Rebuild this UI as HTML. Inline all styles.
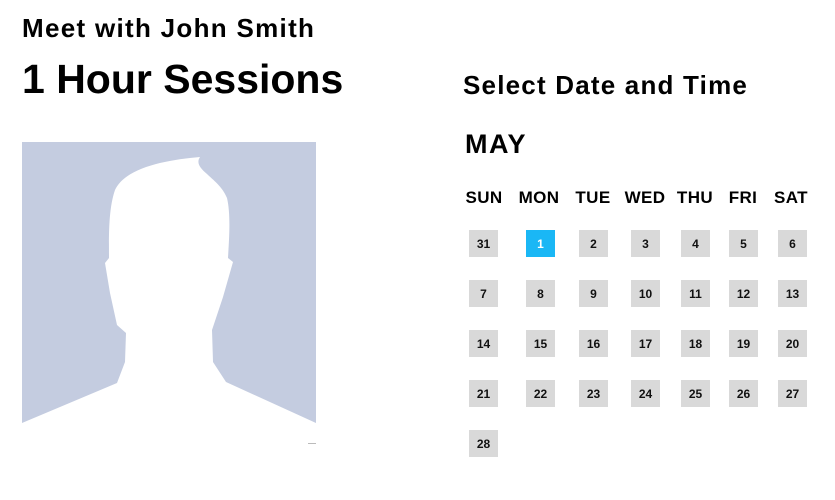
<!DOCTYPE html><html><head><style>
body{margin:0;width:835px;height:500px;background:#fff;font-family:"Liberation Sans",Arial,sans-serif;position:relative;overflow:hidden;color:#000}
.t{position:absolute;font-weight:bold;white-space:nowrap}
.h{position:absolute;top:188px;font-size:17px;font-weight:bold;transform:translateX(-50%);letter-spacing:0.4px}
.d{position:absolute;width:29px;height:27px;background:#d9d9d9;font-size:12px;font-weight:bold;display:flex;align-items:center;justify-content:center;color:#111}
.sel{background:#1ab7f5;color:#fff}
</style></head><body>
<div class="t" style="left:22px;top:13px;font-size:26px;letter-spacing:1.3px">Meet with John Smith</div>
<div class="t" style="left:22px;top:56px;font-size:41px">1 Hour Sessions</div>
<div class="t" style="left:463px;top:70px;font-size:26px;letter-spacing:1.2px">Select Date and Time</div>
<div class="t" style="left:465px;top:129px;font-size:27px;letter-spacing:1.5px">MAY</div>
<svg style="position:absolute;left:0;top:0" width="835" height="500">
<rect x="22" y="142" width="294" height="282" fill="#c4cce0"/>
<path d="M200,157 C165,160 125,168 115,190 C108,210 109,240 109,258 L105,263 L110,293 L117,325 L126,333 L125,362 L117,383 L22,423 L22,424 L316,424 L316,423 L226,382 L213,362 L212,330 L223,297 L233,262 L228,258 C229,240 231,215 227,198 C222,186 213,180 207,174 C200,168 196,163 200,157 Z" fill="#fff"/>
<rect x="308" y="443" width="8" height="1" fill="#bbb"/>
</svg>
<div class="h" style="left:484px">SUN</div><div class="h" style="left:539px">MON</div><div class="h" style="left:593px">TUE</div><div class="h" style="left:645px">WED</div><div class="h" style="left:695px">THU</div><div class="h" style="left:743px">FRI</div><div class="h" style="left:791px">SAT</div>
<div class="d" style="left:469px;top:230px">31</div><div class="d sel" style="left:526px;top:230px">1</div><div class="d" style="left:579px;top:230px">2</div><div class="d" style="left:631px;top:230px">3</div><div class="d" style="left:681px;top:230px">4</div><div class="d" style="left:729px;top:230px">5</div><div class="d" style="left:778px;top:230px">6</div>
<div class="d" style="left:469px;top:280px">7</div><div class="d" style="left:526px;top:280px">8</div><div class="d" style="left:579px;top:280px">9</div><div class="d" style="left:631px;top:280px">10</div><div class="d" style="left:681px;top:280px">11</div><div class="d" style="left:729px;top:280px">12</div><div class="d" style="left:778px;top:280px">13</div>
<div class="d" style="left:469px;top:330px">14</div><div class="d" style="left:526px;top:330px">15</div><div class="d" style="left:579px;top:330px">16</div><div class="d" style="left:631px;top:330px">17</div><div class="d" style="left:681px;top:330px">18</div><div class="d" style="left:729px;top:330px">19</div><div class="d" style="left:778px;top:330px">20</div>
<div class="d" style="left:469px;top:380px">21</div><div class="d" style="left:526px;top:380px">22</div><div class="d" style="left:579px;top:380px">23</div><div class="d" style="left:631px;top:380px">24</div><div class="d" style="left:681px;top:380px">25</div><div class="d" style="left:729px;top:380px">26</div><div class="d" style="left:778px;top:380px">27</div>
<div class="d" style="left:469px;top:430px">28</div>
</body></html>
